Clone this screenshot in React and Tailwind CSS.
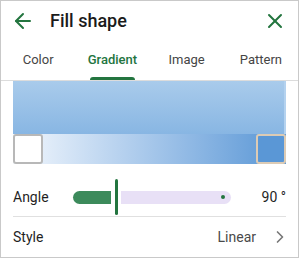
import React from "react";
import { ArrowLeft, X, ChevronRight } from "lucide-react";

export default function App() {
  const tabs = ["Color", "Gradient", "Image", "Pattern"];
  return (
    <div className="w-[300px] h-[258px] bg-white" style={{ fontFamily: "Roboto, 'Noto Sans', sans-serif" }}>
      <div className="w-[299px] h-[258px] border border-[#c9c9c9] flex flex-col overflow-hidden">
        {/* Header */}
        <div className="h-[39px] flex items-center">
          <ArrowLeft size={24} strokeWidth={2} className="ml-[10px] text-[#23753f]" />
          <span className="ml-[15px] text-[18px] font-medium text-[#1b1b1b] leading-none">Fill shape</span>
          <X size={24} strokeWidth={2} className="ml-auto mr-[11px] text-[#23753f]" />
        </div>
        {/* Tabs */}
        <div className="flex border-b border-[#dcdcdc]">
          {tabs.map((t) => (
            <div key={t} className="w-[75px] h-10 flex flex-col items-center">
              <span
                className={
                  "mt-[12px] text-[13px] leading-[16px] " +
                  (t === "Gradient" ? "text-[#23753f] font-medium" : "text-[#454545]")
                }
              >
                {t}
              </span>
              {t === "Gradient" && (
                <div className="mt-auto w-[45px] h-[3px] rounded-t-[3px] bg-[#23753f]" />
              )}
            </div>
          ))}
        </div>
        {/* Preview */}
        <div className="mx-[12px] h-[53px] bg-gradient-to-b from-[#a9cbeb] to-[#88b6e3] border-r-2 border-[#b4d2ef]" />
        {/* Gradient bar */}
        <div className="mx-[12px] h-[30px] flex items-center justify-between bg-gradient-to-r from-[#f4f8fd] to-[#5896d5]">
          <div className="w-[30px] h-[30px] rounded-[3px] bg-white border-2 border-[#b8b8b8]" />
          <div className="w-[30px] h-[30px] rounded-[3px] bg-[#5a97d6] border-2 border-[#dccbb5]" />
        </div>
        {/* Angle row */}
        <div className="mx-[12px] mt-[15px] h-[36px] flex items-center">
          <span className="w-[60px] text-[14px] text-[#1f1f1f]">Angle</span>
          <div className="w-[38px] h-[13px] rounded-l-full rounded-r-[2px] bg-[#3c8a5b]" />
          <div className="ml-[4px] w-[3px] h-[36px] rounded-full bg-[#23753f]" />
          <div className="ml-[3px] w-[110px] h-[13px] rounded-r-full rounded-l-[2px] bg-[#e8e0f6] flex items-center justify-end pr-[6px]">
            <div className="w-[4px] h-[4px] rounded-full bg-[#23753f]" />
          </div>
          <span className="ml-auto text-[14px] text-[#1f1f1f]">90 °</span>
        </div>
        <div className="mx-[12px] mt-[1px] h-px bg-[#e0e0e0]" />
        {/* Style row */}
        <div className="mx-[12px] h-[40px] flex items-center">
          <span className="text-[14px] text-[#1f1f1f]">Style</span>
          <span className="ml-auto text-[14px] text-[#4a4a4a]">Linear</span>
          <ChevronRight size={20} strokeWidth={2} className="ml-[14px] mr-[-4px] text-[#777777]" />
        </div>
      </div>
    </div>
  );
}
